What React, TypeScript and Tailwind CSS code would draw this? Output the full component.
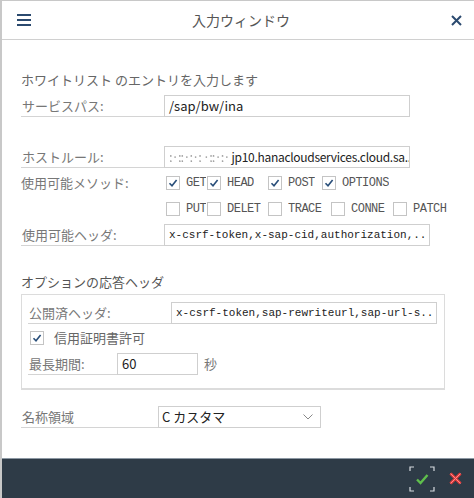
import React from "react";

const jp = { fontFamily: '"Noto Sans CJK JP", "Noto Sans", sans-serif' };
const mono = { fontFamily: '"Liberation Mono", "DejaVu Sans Mono", monospace' };

const Check = ({ on }: { on?: boolean }) => (
  <span className="flex h-[14px] w-[14px] shrink-0 items-center justify-center border border-[#c4c4c4] bg-white">
    {on && (
      <svg width="10" height="10" viewBox="0 0 10 10">
        <path d="M1.5 5.2 L4 7.8 L8.6 2" fill="none" stroke="#2a4f7a" strokeWidth="1.6" />
      </svg>
    )}
  </span>
);

const Method = ({ label, on, w }: { label: string; on?: boolean; w: string }) => (
  <div className={`flex h-[16px] shrink-0 items-center gap-[6px] ${w}`}>
    <Check on={on} />
    <span
      className="overflow-hidden whitespace-nowrap text-[12px] leading-[16px] tracking-[-0.5px] text-[#555]"
      style={mono}
    >
      {label}
    </span>
  </div>
);

const Field = ({
  label,
  children,
  lw,
}: {
  label: string;
  children: React.ReactNode;
  lw: string;
}) => (
  <div className="flex items-stretch">
    <div className={`flex shrink-0 items-center border-b border-[#d4d4d4] text-[13px] text-[#777] ${lw}`} style={jp}>
      <span className="pl-[1px]">{label}</span>
    </div>
    {children}
  </div>
);

const Input = ({ children, w, m }: { children: React.ReactNode; w: string; m?: boolean }) => (
  <div
    className={`flex h-[22px] items-center overflow-hidden whitespace-nowrap border border-[#cfcfcf] bg-white px-[4px] text-[#222] ${m ? "text-[11px]" : "text-[13px]"} ${w}`}
    style={m ? mono : jp}
  >
    {children}
  </div>
);

export default function App() {
  return (
    <div className="flex h-[498px] w-[474px] flex-col border-l-2 border-t border-[#c8c8c8] bg-white" style={jp}>
      <div className="flex h-[39px] shrink-0 items-center border-b border-[#d0d0d0] pl-[15px] pr-[12px]">
        <div className="flex w-[14px] flex-col gap-[3px]">
          <span className="h-[2px] bg-[#2b4a6f]" />
          <span className="h-[2px] bg-[#2b4a6f]" />
          <span className="h-[2px] bg-[#2b4a6f]" />
        </div>
        <div className="flex-1 text-center text-[14px] text-[#555]">入力ウィンドウ</div>
        <svg width="11" height="11" viewBox="0 0 11 11">
          <path d="M1 1 L10 10 M10 1 L1 10" stroke="#2b4a6f" strokeWidth="2" />
        </svg>
      </div>

      <div className="flex flex-1 flex-col pl-[19px] pt-[31px]">
        <div className="text-[13px] leading-[18px] text-[#666]">ホワイトリスト のエントリを入力します</div>

        <div className="mt-[6px]">
          <Field label="サービスパス:" lw="w-[143px]">
            <Input w="w-[246px]">/sap/bw/ina</Input>
          </Field>
        </div>

        <div className="mt-[29px]">
          <Field label="ホストルール:" lw="w-[143px]">
            <Input w="w-[246px]">
              <span className="mr-[2px] tracking-[-1px] text-[#a0a0a0] blur-[0.5px]">:·::·:·: ·::·:·</span>
              <span className="text-[12px] tracking-[-0.3px]">jp10.hanacloudservices.cloud.sa..</span>
            </Input>
          </Field>
        </div>

        <div className="mt-[7px] flex">
          <div className="flex h-[16px] w-[145px] shrink-0 items-center text-[13px] text-[#777]">使用可能メソッド:</div>
          <div className="flex flex-col gap-[10px]">
            <div className="flex">
              <Method label="GET" on w="w-[41px]" />
              <Method label="HEAD" on w="w-[61px]" />
              <Method label="POST" on w="w-[54px]" />
              <Method label="OPTIONS" on w="w-[110px]" />
            </div>
            <div className="flex">
              <Method label="PUT" w="w-[41px]" />
              <Method label="DELET" w="w-[61px]" />
              <Method label="TRACE" w="w-[63px]" />
              <Method label="CONNE" w="w-[62px]" />
              <Method label="PATCH" w="w-[70px]" />
            </div>
          </div>
        </div>

        <div className="mt-[7px]">
          <Field label="使用可能ヘッダ:" lw="w-[143px]">
            <Input w="w-[266px]" m>
              x-csrf-token,x-sap-cid,authorization,..
            </Input>
          </Field>
        </div>

        <div className="mt-[27px] text-[13px] leading-[18px] text-[#555]">オプションの応答ヘッダ</div>
        <div className="mt-[3px] w-[424px] border border-b-2 border-[#dcdcdc] px-[6px] pb-[13px] pt-[7px]">
          <Field label="公開済ヘッダ:" lw="w-[143px]">
            <Input w="w-[266px]" m>
              x-csrf-token,sap-rewriteurl,sap-url-s..
            </Input>
          </Field>
          <div className="mt-[6px] flex h-[16px] items-center gap-[10px] pl-[2px]">
            <Check on />
            <span className="text-[13px] text-[#666]">信用証明書許可</span>
          </div>
          <div className="mt-[7px] flex items-center">
            <Field label="最長期間:" lw="w-[89px]">
              <Input w="w-[81px]">60</Input>
            </Field>
            <span className="ml-[6px] text-[13px] text-[#777]">秒</span>
          </div>
        </div>

        <div className="mt-[16px]">
          <Field label="名称領域" lw="w-[137px]">
            <div className="flex h-[22px] w-[163px] items-center justify-between border border-[#cfcfcf] bg-white pl-[3px] pr-[7px] text-[13px] text-[#222]">
              <span>C カスタマ</span>
              <svg width="10" height="6" viewBox="0 0 10 6">
                <path d="M0.5 0.5 L5 5 L9.5 0.5" fill="none" stroke="#888" strokeWidth="1" />
              </svg>
            </div>
          </Field>
        </div>
      </div>

      <div className="flex h-[40px] shrink-0 items-center justify-end gap-[14px] border-t border-[#8c98a3] bg-[#2e3b47] pr-[12px]">
        <div className="relative h-[26px] w-[26px]">
          <svg className="absolute inset-0" width="26" height="26" viewBox="0 0 26 26">
            <path
              d="M1 5 V1 H5 M21 1 H25 V5 M25 21 V25 H21 M5 25 H1 V21"
              fill="none"
              stroke="#d6dbe0"
              strokeWidth="1.2"
            />
            <path d="M8 13.5 L11.5 17 L18.5 9" fill="none" stroke="#5fbf4c" strokeWidth="2.4" />
          </svg>
        </div>
        <svg width="13" height="13" viewBox="0 0 13 13">
          <path d="M1.5 1.5 L11.5 11.5 M11.5 1.5 L1.5 11.5" stroke="#e03a3a" strokeWidth="3" />
          <path d="M1.5 1.5 L11.5 11.5 M11.5 1.5 L1.5 11.5" stroke="#ff8a8a" strokeWidth="1" />
        </svg>
      </div>
    </div>
  );
}
